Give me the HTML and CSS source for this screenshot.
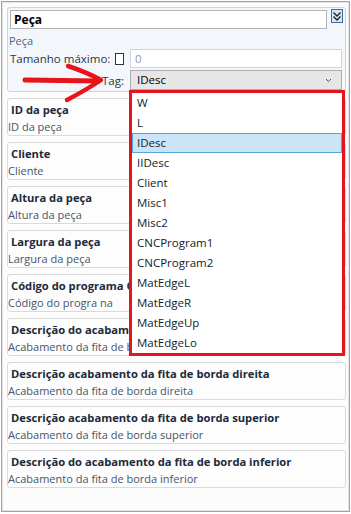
FILE: index.html
```html
<!DOCTYPE html>
<html lang="pt">

<head>
    <meta charset="UTF-8">
    <title>Peça</title>
    <link rel="stylesheet" href="styles.css">
</head>

<body>
    <div class="janela">
        <section class="topo">
            <div class="titulo-linha">
                <div class="titulo">Peça</div>
                <span class="expandir">
                    <svg width="12" height="14" viewBox="0 0 12 14">
                        <rect x="0.5" y="0.5" width="11" height="13" fill="#d6e7f5" stroke="#3d6d98" />
                        <path d="M2.5 3.5 L6 7 L9.5 3.5 M2.5 7.5 L6 11 L9.5 7.5" fill="none" stroke="#1b1b1b" stroke-width="1.3" />
                    </svg>
                </span>
            </div>
            <div class="legenda">Peça</div>
            <div class="props">
                <div class="rotulo">Tamanho máximo: <span class="caixa"></span></div>
                <div class="campo apagado">0</div>
                <div class="rotulo">Tag:</div>
                <div class="campo selecao">IDesc
                    <svg class="seta" width="7" height="5" viewBox="0 0 7 5">
                        <path d="M1 1 L3.5 3.5 L6 1" fill="none" stroke="#555" stroke-width="1" />
                    </svg>
                </div>
            </div>
        </section>

        <div class="cartao">
            <div class="nome">ID da peça</div>
            <div class="sub">ID da peça</div>
        </div>
        <div class="cartao">
            <div class="nome">Cliente</div>
            <div class="sub">Cliente</div>
        </div>
        <div class="cartao">
            <div class="nome">Altura da peça</div>
            <div class="sub">Altura da peça</div>
        </div>
        <div class="cartao">
            <div class="nome">Largura da peça</div>
            <div class="sub">Largura da peça</div>
        </div>
        <div class="cartao">
            <div class="nome">Código do programa CNC</div>
            <div class="sub">Código do progra na</div>
        </div>
        <div class="cartao">
            <div class="nome">Descrição do acabamento da fita de borda esquerda</div>
            <div class="sub">Acabamento da fita de borda esquerda</div>
        </div>
        <div class="cartao">
            <div class="nome">Descrição acabamento da fita de borda direita</div>
            <div class="sub">Acabamento da fita de borda direita</div>
        </div>
        <div class="cartao">
            <div class="nome">Descrição acabamento da fita de borda superior</div>
            <div class="sub">Acabamento da fita de borda superior</div>
        </div>
        <div class="cartao">
            <div class="nome">Descrição do acabamento da fita de borda inferior</div>
            <div class="sub">Acabamento da fita de borda inferior</div>
        </div>

        <!-- lista aberta do campo Tag -->
        <ul class="lista">
            <li>W</li>
            <li>L</li>
            <li class="valgt">IDesc</li>
            <li>IIDesc</li>
            <li>Client</li>
            <li>Misc1</li>
            <li>Misc2</li>
            <li>CNCProgram1</li>
            <li>CNCProgram2</li>
            <li>MatEdgeL</li>
            <li>MatEdgeR</li>
            <li>MatEdgeUp</li>
            <li>MatEdgeLo</li>
        </ul>

        <svg class="pil" width="110" height="50" viewBox="0 60 110 50">
            <g fill="none" stroke="#e8141c" stroke-linecap="round" stroke-linejoin="round">
                <path d="M25 80 L99 81" stroke-width="5" />
                <path d="M68 66 Q86 72 101 80 Q86 90 67 100" stroke-width="4.5" />
            </g>
        </svg>
    </div>
</body>

</html>
```

FILE: styles.css
```css
* {
    margin: 0;
    padding: 0;
    box-sizing: border-box;
}

body {
    font-family: "Segoe UI", "Open Sans", sans-serif;
    font-size: 11px;
    color: #1d2b3a;
    background: #fff;
}

.janela {
    position: relative;
    margin: 1px;
    width: 349px;
    height: 511px;
    border: 1px solid #a3a3a3;
    box-shadow: inset 0 0 0 1px #e4e4e4;
    background: #fcfcfc;
    padding: 5px 3px 5px 5px;
    display: flex;
    flex-direction: column;
    gap: 6px;
}

.topo {
    border: 1px solid #c6d6e6;
    border-radius: 3px;
    background: #f3f7fb;
    padding: 2px 2px 1px 2px;
}

.titulo-linha {
    display: flex;
    align-items: flex-start;
    gap: 4px;
}

.titulo {
    width: 319px;
    height: 19px;
    background: #fff;
    border: 1px solid #b4b4b4;
    font-weight: bold;
    font-size: 12px;
    line-height: 17px;
    padding-left: 3px;
    color: #000;
}

.expandir {
    margin-top: -1px;
    height: 14px;
}

.expandir svg {
    display: block;
}

.legenda {
    margin: 4px 0 0 -1px;
    line-height: 16px;
    color: #52647a;
}

.props {
    display: grid;
    grid-template-columns: 118px 212px;
    column-gap: 2px;
    row-gap: 2px;
    align-items: center;
}

.rotulo {
    display: flex;
    justify-content: flex-end;
    align-items: center;
    gap: 5px;
    color: #2a3645;
    padding-right: 4px;
    white-space: nowrap;
    font-size: 11.5px;
}

.caixa {
    width: 12px;
    height: 12px;
    border: 1px solid #333;
    background: #fff;
}

.campo {
    height: 19px;
    border: 1px solid #cfd5db;
    background: #fff;
    padding-left: 4px;
    line-height: 17px;
    font-size: 11.5px;
}

.apagado {
    color: #8d9bab;
}

.selecao {
    height: 20px;
    background: #e6e6e6;
    border-color: #adadad;
    color: #000;
    padding-left: 6px;
    line-height: 18px;
    display: flex;
    justify-content: space-between;
    align-items: center;
    padding-right: 9px;
}

.seta {
    display: block;
}

.cartao {
    height: 38px;
    border: 1px solid #dadada;
    border-radius: 3px;
    background: #fdfdfd;
    padding-top: 2px;
    flex-shrink: 0;
}

.nome {
    font-weight: bold;
    font-size: 11.2px;
    line-height: 18px;
    padding-left: 3px;
    white-space: nowrap;
    overflow: hidden;
    color: #1c2a3a;
}

.sub {
    line-height: 16px;
    color: #46566a;
    white-space: nowrap;
    overflow: hidden;
}

.lista {
    position: absolute;
    left: 127px;
    top: 88px;
    width: 216px;
    border: 3px solid #e8141c;
    background: #fff;
    list-style: none;
}

.lista li {
    height: 20px;
    padding-left: 4px;
    color: #101c2c;
    border: 1px solid transparent;
    line-height: 18px;
    font-size: 11.5px;
}

.lista .valgt {
    background: #cbe5f6;
    border-color: #54a6dc;
}

.pil {
    position: absolute;
    left: -2px;
    top: 58px;
}
```
